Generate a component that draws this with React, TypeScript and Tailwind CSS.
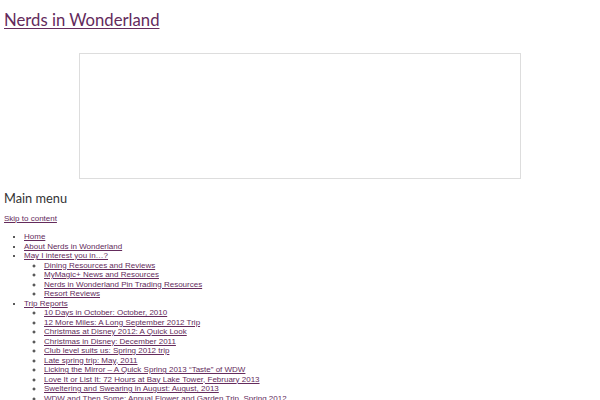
const MAY_I = [
  "Dining Resources and Reviews",
  "MyMagic+ News and Resources",
  "Nerds in Wonderland Pin Trading Resources",
  "Resort Reviews",
];

const TRIP_REPORTS = [
  "10 Days in October: October, 2010",
  "12 More Miles: A Long September 2012 Trip",
  "Christmas at Disney 2012: A Quick Look",
  "Christmas in Disney: December 2011",
  "Club level suits us: Spring 2012 trip",
  "Late spring trip: May, 2011",
  "Licking the Mirror – A Quick Spring 2013 “Taste” of WDW",
  "Love It or List It: 72 Hours at Bay Lake Tower, February 2013",
  "Sweltering and Swearing in August: August, 2013",
  "WDW and Then Some: Annual Flower and Garden Trip, Spring 2012",
  "Wine and Dine Half Marathon: November 2013",
];

function MenuLink({ label }: { label: string }) {
  return (
    <a href="#" className="text-[#642b5c] underline">
      {label}
    </a>
  );
}

function SubMenu({ items }: { items: string[] }) {
  return (
    <ul className="list-[circle] pl-[20px]">
      {items.map((label) => (
        <li key={label}>
          <MenuLink label={label} />
        </li>
      ))}
    </ul>
  );
}

export default function App() {
  return (
    <div className="bg-white px-[4px] text-[#222] font-['Liberation_Sans',Arial,sans-serif]">
      {/* Site title */}
      <h1 className="pt-[10px] text-[16.7px] leading-[20px] font-normal font-['Lato','Open_Sans',sans-serif]">
        <a href="#" className="text-[#642b5c] underline decoration-1 underline-offset-2">
          Nerds in Wonderland
        </a>
      </h1>

      {/* Embedded frame */}
      <div className="mx-auto mt-[23px] h-[126px] w-[442px] border border-[#dddddd] bg-white" />

      {/* Navigation */}
      <h3 className="mt-[10px] text-[12.8px] leading-[18px] font-normal text-[#333] font-['Lato','Open_Sans',sans-serif]">
        Main menu
      </h3>
      <div className="mt-[7px] text-[8px] leading-[10px]">
        <MenuLink label="Skip to content" />
      </div>
      <ul className="mt-[8px] list-disc pl-[20px] text-[8px] leading-[9.5px]">
        <li>
          <MenuLink label="Home" />
        </li>
        <li>
          <MenuLink label="About Nerds in Wonderland" />
        </li>
        <li>
          <MenuLink label="May I interest you in…?" />
          <SubMenu items={MAY_I} />
        </li>
        <li>
          <MenuLink label="Trip Reports" />
          <SubMenu items={TRIP_REPORTS} />
        </li>
      </ul>
    </div>
  );
}
